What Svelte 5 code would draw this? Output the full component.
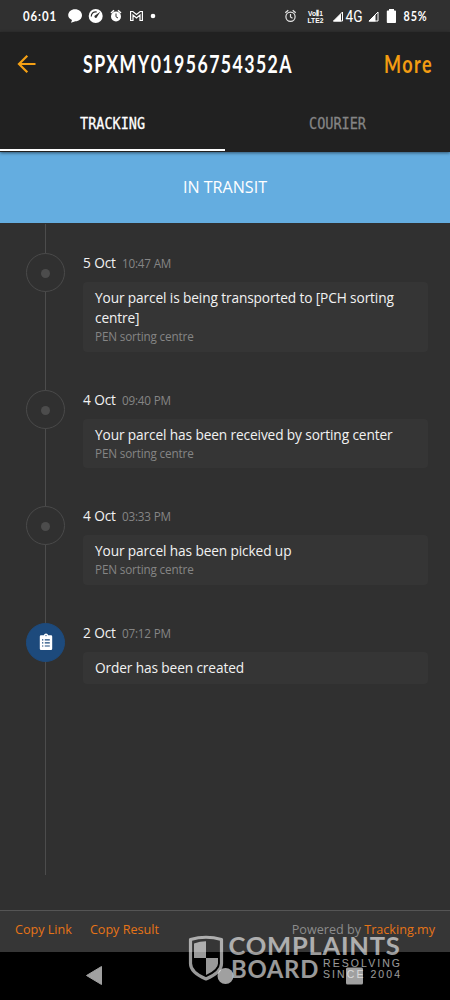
<script>
  const events = [
    {
      date: "5 Oct",
      time: "10:47 AM",
      text: "Your parcel is being transported to [PCH sorting centre]",
      place: "PEN sorting centre",
    },
    {
      date: "4 Oct",
      time: "09:40 PM",
      text: "Your parcel has been received by sorting center",
      place: "PEN sorting centre",
    },
    {
      date: "4 Oct",
      time: "03:33 PM",
      text: "Your parcel has been picked up",
      place: "PEN sorting centre",
    },
    { date: "2 Oct", time: "07:12 PM", text: "Order has been created", created: true },
  ];

  const tabs = [
    { name: "TRACKING", width: 65 },
    { name: "COURIER", width: 57 },
  ];
  let activeTab = $state("TRACKING");
</script>

<div class="screen">
  <div class="status-bar">
    <svg width="450" height="32" viewBox="0 0 450 32">
      <g fill="#fff">
        <text class="hand" x="23" y="21" font-size="13.500" textLength="34" lengthAdjust="spacingAndGlyphs">06:01</text>
        <path d="M75 9.300c4 0 7 2.600 7 6s-3 6-6.600 6l-4.400 1.500 1-2.700c-2.400-1.100-3.800-2.800-3.800-4.800 0-3.400 3-6 6.800-6z" />
        <circle cx="95.700" cy="16" r="7" />
        <path d="M91.300 16.500a4.300 4.300 0 0 1 5.500-4.500" fill="none" stroke="#303030" stroke-width="1.200" />
        <path d="M94.300 16l6-4.200-3.800 6q-1.800.8-2.200-1.800z" fill="#303030" />
        <circle cx="116" cy="16.500" r="5" />
        <path d="M111 13l3-2.700M121 13l-3-2.700" stroke="#fff" stroke-width="1.500" />
        <path d="M116 13.500v3.300l2 1.200" fill="none" stroke="#303030" stroke-width="1" />
        <path d="M130.600 20.500v-9h2.200l3.700 3 3.700-3h2.200v9h-2.400v-5.500l-3.500 3-3.500-3v5.500z" fill="none" stroke="#fff" stroke-width="1.200" />
        <circle cx="153" cy="16" r="2.300" />
      </g>
      <g fill="none" stroke="#e4e4e4" stroke-width="1.200">
        <circle cx="290.500" cy="16.700" r="4.600" />
        <path d="M285.300 12.800l3-2.500M295.700 12.800l-3-2.500M290.500 14v3l2 1.200" />
      </g>
      <g fill="#fff">
        <text class="narrow" x="308" y="15.500" font-size="8" textLength="15" lengthAdjust="spacingAndGlyphs">Vo⦀1</text>
        <text class="narrow" x="307.500" y="22.500" font-size="7.500" textLength="16" lengthAdjust="spacingAndGlyphs">LTE2</text>
        <path d="M333 21.500l8-8v8z" />
        <path d="M333.500 21l9-9v9z" fill="none" stroke="#fff" />
        <text class="four-g" x="345.500" y="21.700" font-size="16" textLength="17" lengthAdjust="spacingAndGlyphs">4G</text>
        <path d="M368.500 21.500l7-7v7z" />
        <path d="M369 21l9-9v9z" fill="none" stroke="#fff" />
        <path d="M389 9h5v1.500h1.200q.8 0 .8.800v11q0 .8-.8.800h-7.600q-.8 0-.8-.8v-11q0-.8.800-.8h1.400z" />
        <text class="hand" x="403.500" y="20.500" font-size="12.500" textLength="24" lengthAdjust="spacingAndGlyphs">85%</text>
      </g>
    </svg>
  </div>

  <header>
    <div class="app-bar">
      <button class="back" aria-label="Back">
        <svg width="20" height="20" viewBox="0 0 20 20">
          <path d="M18.500 10H2.500M10.300 1.700L2 10l8.300 8.300" />
        </svg>
      </button>
      <svg class="title" width="214" height="40" viewBox="-2 0 214 40">
        <text class="hand" x="0" y="29" font-size="24.500" textLength="210" lengthAdjust="spacingAndGlyphs">SPXMY01956754352A</text>
      </svg>
      <svg class="more" width="52" height="40" viewBox="-2 0 52 40">
        <text class="hand" x="0" y="29" font-size="24.500" textLength="49" lengthAdjust="spacingAndGlyphs">More</text>
      </svg>
    </div>
    <div class="tabs">
      {#each tabs as tab}
        <button
          class="tab"
          class:active={activeTab === tab.name}
          onclick={() => (activeTab = tab.name)}
        >
          <svg width={tab.width + 4} height="28">
            <text x="2" y="20" font-size="16" textLength={tab.width} lengthAdjust="spacingAndGlyphs">{tab.name}</text>
          </svg>
        </button>
      {/each}
    </div>
  </header>

  <div class="banner">IN TRANSIT</div>

  <main>
    {#each events as event}
      <div class="event">
        <div class="marker" class:created={event.created}>
          {#if event.created}
            <svg width="14" height="18" viewBox="0 0 14 18">
              <path fill="#fff" d="M2 2.200h2.800a2.300 2.300 0 0 1 4.400 0H12q1.200 0 1.200 1.200v12.400q0 1.200-1.200 1.200H2q-1.200 0-1.200-1.200V3.400Q.8 2.200 2 2.200z" />
              <path stroke="#1d4a7c" stroke-width="1.200" d="M3 6.800h1.300M5.800 6.800h5M3 9.900h1.300M5.800 9.900h5M3 13h1.300M5.800 13h5" />
              <circle cx="7" cy="2.600" r=".7" fill="#1d4a7c" />
            </svg>
          {:else}
            <span class="dot"></span>
          {/if}
        </div>
        <div class="details">
          <div class="when">{event.date}<span class="time">{event.time}</span></div>
          <div class="card">
            <div class="text">{event.text}</div>
            {#if event.place}<div class="place">{event.place}</div>{/if}
          </div>
        </div>
      </div>
    {/each}
  </main>

  <footer>
    <span class="link">Copy Link</span>
    <span class="link">Copy Result</span>
    <span class="powered">Powered by <span class="link">Tracking.my</span></span>
  </footer>

  <nav>
    <svg width="450" height="48" viewBox="0 952 450 48">
      <g fill="#a0a0a0">
        <path d="M86.500 975.500l15-9v18z" stroke="#a0a0a0" stroke-linejoin="round" />
        <circle cx="225.500" cy="976" r="8" />
        <rect x="346" y="967.500" width="17" height="17" rx="1.500" />
      </g>
    </svg>
  </nav>

  <svg class="watermark" width="220" height="56" viewBox="185 930 220 56">
    <g fill="#fff">
      <path d="M190.500 939.500q15.500-4.500 31 0v24q0 9-15.500 15.500-15.500-6.500-15.500-15.500z" fill="none" stroke="#fff" stroke-width="3.200" stroke-linejoin="round" />
      <path d="M194 943.500q6-2.200 12-2.200v16.700h-12zM206 958h12v5.500q0 6-12 11.500z" />
      <text class="brand" x="228.500" y="955" font-size="24.500" textLength="172" lengthAdjust="spacingAndGlyphs">COMPLAINTS</text>
      <text class="brand" x="231" y="977.500" font-size="24.500" textLength="88" lengthAdjust="spacingAndGlyphs">BOARD</text>
      <text class="tagline" x="323" y="967" font-size="10.500" textLength="77">RESOLVING</text>
      <text class="tagline" x="323" y="977.500" font-size="10.500" textLength="77">SINCE 2004</text>
    </g>
  </svg>
</div>

<style>
  :global(body) {
    margin: 0;
    background: #303030;
  }

  .screen {
    position: relative;
    display: flex;
    flex-direction: column;
    width: 450px;
    height: 1000px;
    overflow: hidden;
    background: #303030;
    color: #f2f2f2;
    font-family: "Open Sans", "Noto Sans", sans-serif;
  }

  svg {
    display: block;
    flex: none;
    overflow: visible;
  }

  button {
    padding: 0;
    border: none;
    background: none;
    cursor: pointer;
  }

  .hand {
    font-family: Lato, sans-serif;
    font-weight: 700;
    letter-spacing: 0.08em;
  }
  .narrow {
    font-family: "Liberation Sans", sans-serif;
    font-weight: 700;
  }
  .four-g {
    font-family: Roboto, sans-serif;
  }

  .status-bar {
    height: 32px;
  }

  header {
    position: relative;
    z-index: 1;
    height: 120px;
    background: #212121;
    box-shadow: 0 1px 3px rgba(0, 0, 0, 0.5);
  }

  .app-bar {
    display: flex;
    align-items: center;
    height: 64px;
    padding: 0 16px 0 17px;
  }

  .back path {
    fill: none;
    stroke: #f5a014;
    stroke-width: 2.2;
  }

  .title {
    margin-left: 44px;
    fill: #fff;
  }
  .more {
    margin-left: auto;
    fill: #f39c12;
  }

  .tabs {
    display: flex;
    height: 55px;
  }

  .tab {
    display: flex;
    flex: 1;
    align-items: center;
    justify-content: center;
    border-bottom: 2px solid transparent;
    fill: #858585;
    stroke: #858585;
    stroke-width: 0.3;
  }
  .tab.active {
    border-color: #fff;
    fill: #fff;
    stroke: #fff;
  }
  .tab text {
    font-family: "DejaVu Sans Mono", monospace;
  }

  .banner {
    height: 71px;
    line-height: 71px;
    background: #64ade0;
    color: #fff;
    font-size: 16.1px;
    text-align: center;
  }

  main {
    position: relative;
    flex: 1;
    padding: 30px 22px 0 26px;
  }
  main::before {
    content: "";
    position: absolute;
    top: 1px;
    left: 45px;
    width: 1px;
    height: 651px;
    background: #4c4c4c;
  }

  .event {
    display: flex;
    gap: 18px;
    margin-bottom: 38px;
  }

  .marker {
    position: relative;
    box-sizing: border-box;
    display: flex;
    flex: none;
    align-items: center;
    justify-content: center;
    width: 39px;
    height: 39px;
    border: 1px solid #4a4a4a;
    border-radius: 50%;
    background: #303030;
  }
  .marker.created {
    border-color: #1d4a7c;
    background: #1d4a7c;
  }

  .dot {
    width: 9px;
    height: 9px;
    margin-top: 2px;
    border-radius: 50%;
    background: #4c4c4c;
  }

  .details {
    flex: 1;
  }

  .when {
    height: 29px;
    font-size: 13.7px;
    letter-spacing: -0.12px;
    line-height: 19.6px;
  }

  .time {
    margin-left: 6px;
    color: #858585;
    font-size: 11.7px;
    letter-spacing: -0.18px;
  }

  .card {
    padding: 6px 12px;
    border-radius: 4px;
    background: #353535;
  }

  .text {
    font-size: 13.7px;
    letter-spacing: -0.12px;
    line-height: 20px;
  }

  .place {
    color: #858585;
    font-size: 11.7px;
    letter-spacing: -0.15px;
    line-height: 17.5px;
  }

  footer {
    box-sizing: border-box;
    display: flex;
    align-items: center;
    gap: 18px;
    height: 42px;
    padding: 0 15px 4px;
    border-top: 1px solid #555;
    background: #363636;
    font-size: 12.6px;
  }

  .link {
    color: #e67417;
  }

  .powered {
    margin-left: auto;
    color: #8c8c8c;
  }

  nav {
    height: 48px;
    background: #000;
  }

  .watermark {
    position: absolute;
    top: 930px;
    left: 185px;
    opacity: 0.6;
  }
  .brand {
    font-family: Lato, sans-serif;
    font-weight: 700;
    letter-spacing: 0.03em;
  }
  .tagline {
    font-family: "Liberation Sans", sans-serif;
  }
</style>
